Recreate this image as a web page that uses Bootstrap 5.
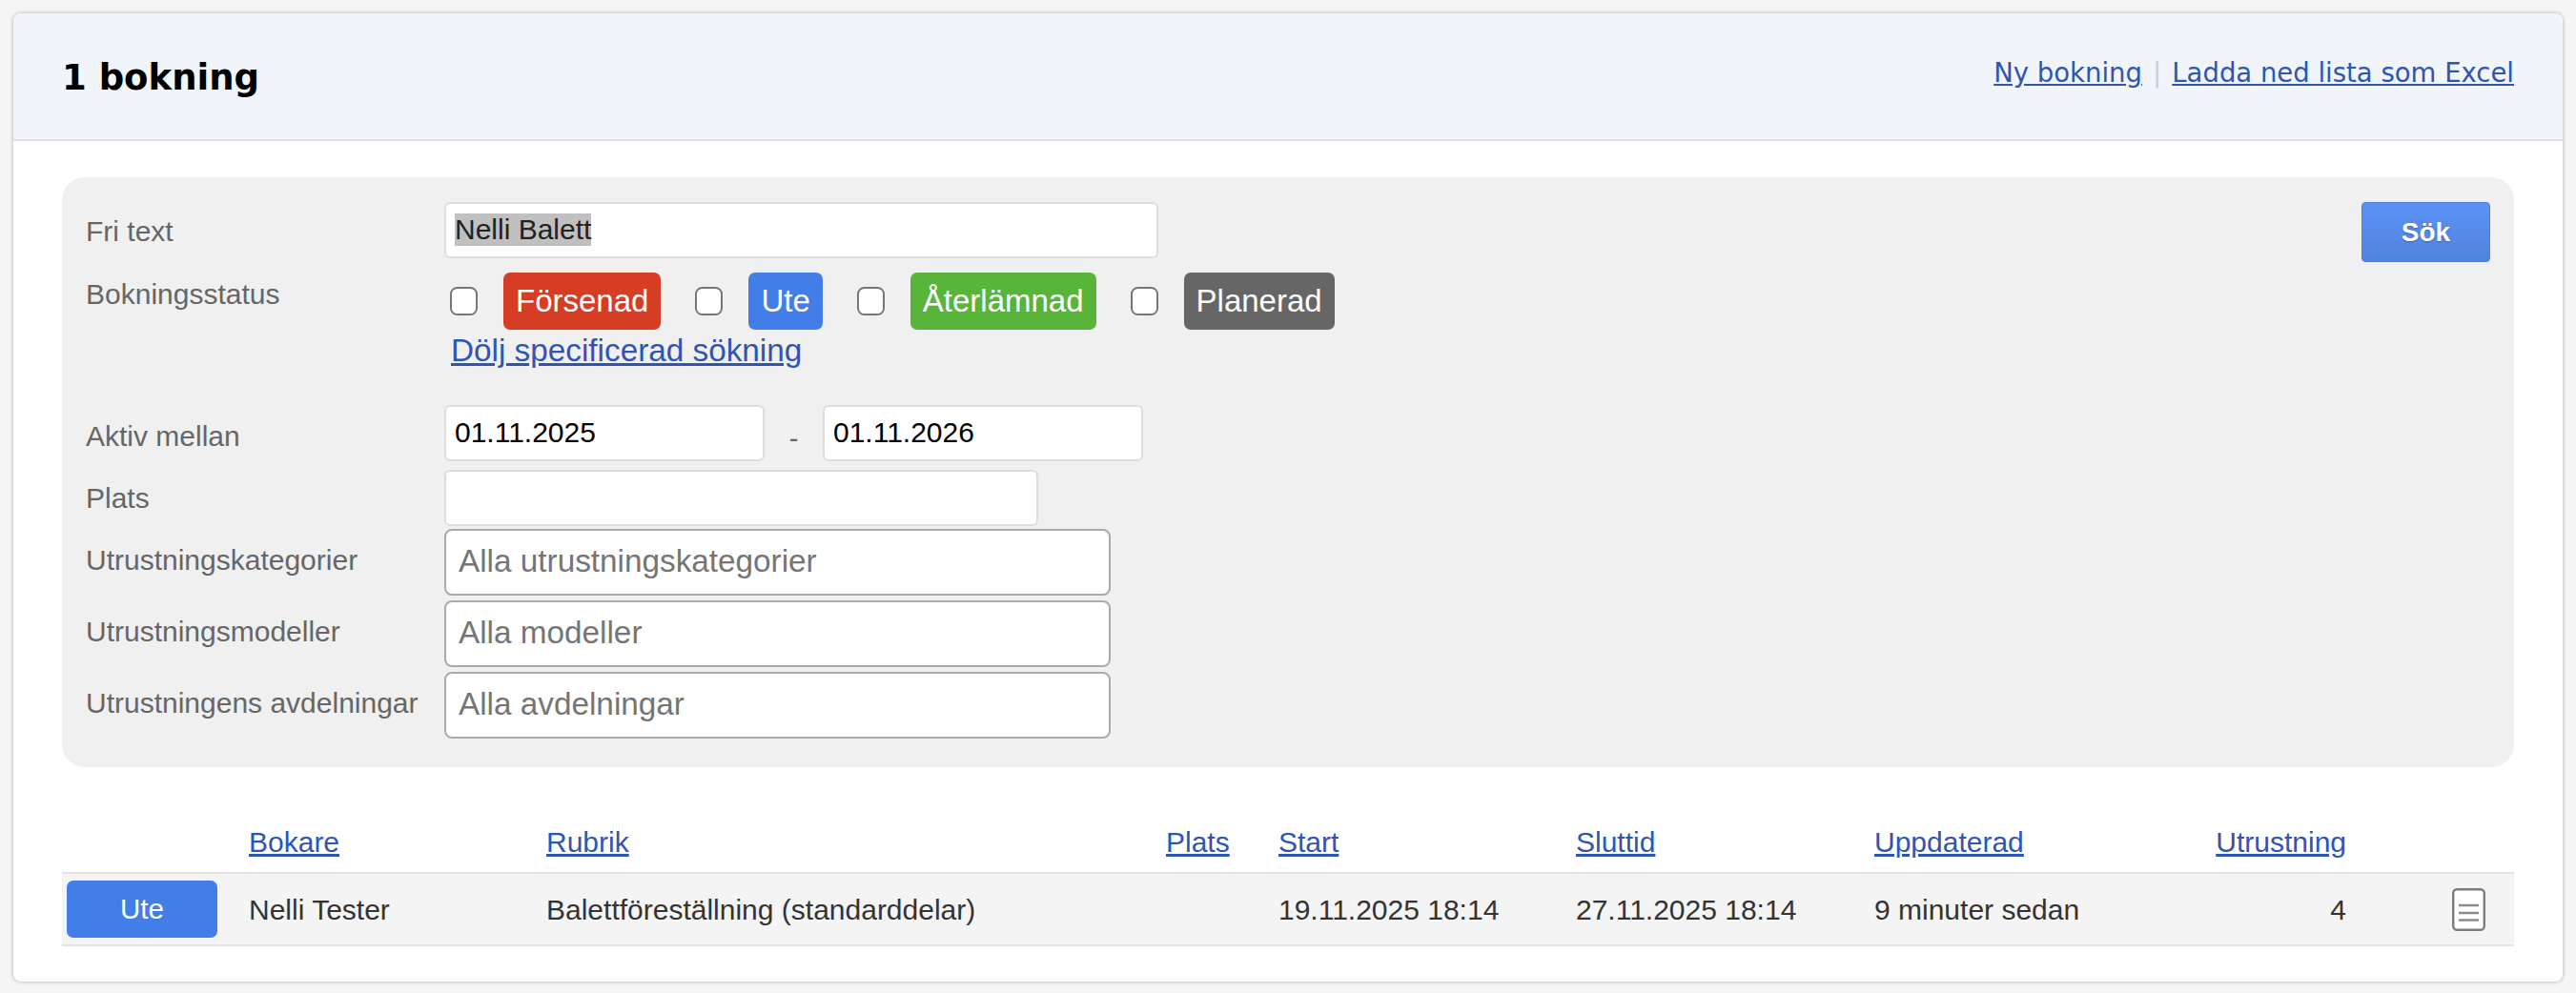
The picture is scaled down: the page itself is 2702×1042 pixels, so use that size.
<!doctype html>
<html lang="sv">
<head>
<meta charset="utf-8">
<title>1 bokning</title>
<link href="https://cdn.jsdelivr.net/npm/bootstrap@5.3.0/dist/css/bootstrap.min.css" rel="stylesheet">
<style>
body{background:#f5f5f5;padding:14px;font-family:"Liberation Sans",Arial,sans-serif;font-size:30px;color:#333;min-height:1042px}
a{color:#2f55b3}
.sheet{background:#fff;border-radius:8px;box-shadow:0 0 4px rgba(0,0,0,.3);height:1016px;overflow:hidden;width:2674px}
.sheet-head{background:#f1f4f9;border-bottom:2px solid #dfe0e8;height:134px;padding:0 51px 0 51px}
.sheet-title{font-family:"DejaVu Sans",sans-serif;font-weight:700;font-size:37px;color:#000;margin:0;line-height:1;padding-top:3px}
.head-links{font-family:"DejaVu Sans",sans-serif;font-size:27.5px;margin-top:-6px;white-space:nowrap}
.head-links i{font-style:normal;color:#ccc;margin:0 11px}
.sheet-body{padding:38px 51px 0}
.filter{background:#f0f0f0;border-radius:24px;height:619px;padding:26px 25px 0 26px}
.frow{display:flex}
.flabel{width:376px;margin-left:-1px;flex:none;color:#666;font-size:30px;line-height:36px}
.lab-free{padding-top:13px}
.lab-status{padding-top:5px}
.lab-date{padding-top:15px}
.lab-place{padding-top:12px}
.lab-sel{padding-bottom:4px}
.fi{font-family:"Liberation Sans",Arial,sans-serif;font-size:30px;color:#000;height:59px;padding:0 9px 2px;border:2px solid #ddd;border-radius:6px;background:#fff;box-shadow:none}
.fi:focus{border-color:#ddd;box-shadow:none;color:#000}
.fi::selection{background:#c0c0c0;color:#222}
.w-free{width:749px}
.w-date{width:336px}
.w-place{width:623px}
.fs{width:699px;height:70px;border:2px solid #aaa;border-radius:8px;font-size:33.3px;padding:0 13px 3px;color:#757575;background:#fff}
.fs::placeholder{color:#757575;opacity:1}
.st-check{width:29px;height:30px;margin:0 27px 0 6px;border:2px solid #777;border-radius:6px;flex:none;background:#fff}
.st-tag{height:60px;padding:0 13px;border-radius:7px;color:#fff;font-size:33px;font-weight:400;line-height:60px;margin-right:36px}
.st-tag+.st-check{margin-left:0}
.c-red{background:#d63d25}
.c-blue{background:#437de8}
.c-green{background:#58b539}
.c-grey{background:#666}
.more{font-size:33.3px;line-height:36px;display:inline-block;margin-left:7px;margin-top:3px}
.gap-status{margin-top:15px}
.gap-date{margin-top:34px}
.gap-place{margin-top:9px}
.gap-first{margin-top:3px}
.gap-sel{margin-top:5px}
.dash{width:61px;text-align:center;color:#666;font-size:29px;padding-top:14px;flex:none}
.go{width:135px;height:63px;background:linear-gradient(#5b92f7,#5283de);border:1px solid #4f80d8;border-radius:4px;color:#fff;font-weight:700;font-size:28px;padding:0;text-shadow:0 1px 2px rgba(0,0,0,.3)}
.go:hover{background:#5283de;color:#fff}
.list{margin:55px 0 0;table-layout:fixed;width:2572px;--bs-table-bg:transparent;font-size:30px;color:#333}
.list th{font-weight:400;font-size:30px;padding:0 0 8px;border-bottom:2px solid #e4e4e4;line-height:47px}
.list td{height:76px;padding:0;vertical-align:middle;background:#f4f4f4;border-bottom:2px solid #e4e4e4;color:#333;box-shadow:none}
.c1{width:196px}.c2{width:312px}.c3{width:650px}.c4{width:118px}.c5{width:312px}.c6{width:313px}.c7{width:335px}.c8{width:160px}
.row-btn{display:block;margin-left:5px;width:158px;height:60px;line-height:60px;border-radius:7px;background:#437de8;color:#fff;text-align:center;font-size:29.5px}
.note{display:block;width:35px;height:45px;margin-left:111px}
</style>
</head>
<body>
<div class="sheet">
  <div class="sheet-head d-flex justify-content-between align-items-center">
    <h1 class="sheet-title">1 bokning</h1>
    <div class="head-links"><a href="#">Ny bokning</a><i>|</i><a href="#">Ladda ned lista som Excel</a></div>
  </div>
  <div class="sheet-body">
    <form class="filter d-flex justify-content-between">
      <div>
        <div class="frow">
          <label class="flabel lab-free">Fri text</label>
          <input id="free" class="form-control fi w-free" type="text" value="Nelli Balett">
        </div>
        <div class="frow gap-status">
          <label class="flabel lab-status">Bokningsstatus</label>
          <div>
            <div class="d-flex align-items-center">
              <input class="form-check-input st-check" type="checkbox" aria-label="Försenad">
              <span class="badge st-tag c-red">Försenad</span>
              <input class="form-check-input st-check" type="checkbox" aria-label="Ute">
              <span class="badge st-tag c-blue">Ute</span>
              <input class="form-check-input st-check" type="checkbox" aria-label="Återlämnad">
              <span class="badge st-tag c-green">Återlämnad</span>
              <input class="form-check-input st-check" type="checkbox" aria-label="Planerad">
              <span class="badge st-tag c-grey">Planerad</span>
            </div>
            <a class="more" href="#">Dölj specificerad sökning</a>
          </div>
        </div>
        <div class="frow align-items-start gap-date">
          <label class="flabel lab-date">Aktiv mellan</label>
          <input class="form-control fi w-date" type="text" value="01.11.2025">
          <span class="dash">-</span>
          <input class="form-control fi w-date" type="text" value="01.11.2026">
        </div>
        <div class="frow gap-place">
          <label class="flabel lab-place">Plats</label>
          <input class="form-control fi w-place" type="text">
        </div>
        <div class="frow align-items-center gap-first">
          <label class="flabel lab-sel">Utrustningskategorier</label>
          <input class="form-control fs" type="text" placeholder="Alla utrustningskategorier">
        </div>
        <div class="frow align-items-center gap-sel">
          <label class="flabel lab-sel">Utrustningsmodeller</label>
          <input class="form-control fs" type="text" placeholder="Alla modeller">
        </div>
        <div class="frow align-items-center gap-sel">
          <label class="flabel lab-sel">Utrustningens avdelningar</label>
          <input class="form-control fs" type="text" placeholder="Alla avdelningar">
        </div>
      </div>
      <div><button type="button" class="btn go">Sök</button></div>
    </form>
    <table class="table list">
      <colgroup><col class="c1"><col class="c2"><col class="c3"><col class="c4"><col class="c5"><col class="c6"><col class="c7"><col class="c8"><col></colgroup>
      <thead>
        <tr>
          <th></th>
          <th><a href="#">Bokare</a></th>
          <th><a href="#">Rubrik</a></th>
          <th><a href="#">Plats</a></th>
          <th><a href="#">Start</a></th>
          <th><a href="#">Sluttid</a></th>
          <th><a href="#">Uppdaterad</a></th>
          <th class="text-end"><a href="#">Utrustning</a></th>
          <th></th>
        </tr>
      </thead>
      <tbody>
        <tr>
          <td><span class="row-btn">Ute</span></td>
          <td>Nelli Tester</td>
          <td>Balettföreställning (standarddelar)</td>
          <td></td>
          <td>19.11.2025 18:14</td>
          <td>27.11.2025 18:14</td>
          <td>9 minuter sedan</td>
          <td class="text-end">4</td>
          <td>
            <svg class="note" viewBox="0 0 35 45" aria-hidden="true"><rect x="1.2" y="1.2" width="32.6" height="42.6" rx="4" fill="#fff" stroke="#7d7d7d" stroke-width="2.4"/><path d="M7 18h21M7 26h21M7 33.500h21" stroke="#8a8a8a" stroke-width="2.400"/></svg>
          </td>
        </tr>
      </tbody>
    </table>
  </div>
</div>
<script src="https://cdn.jsdelivr.net/npm/bootstrap@5.3.0/dist/js/bootstrap.bundle.min.js"></script>
<script>var f=document.getElementById('free');f.focus();f.select();</script>
</body>
</html>
